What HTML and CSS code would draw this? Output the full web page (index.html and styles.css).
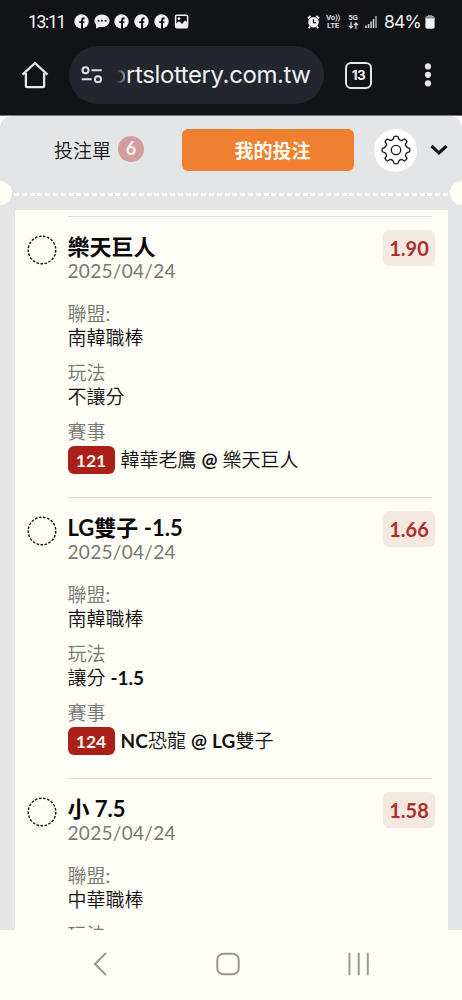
FILE: index.html
```
<!DOCTYPE html>
<html lang="zh-Hant">
<head>
<meta charset="utf-8">
<title>我的投注</title>
<link rel="stylesheet" href="styles.css">
</head>
<body>
<svg class="defs" width="0" height="0">
  <symbol id="fb" viewBox="0 0 15 15">
    <circle cx="7.5" cy="7.5" r="7.2" fill="#f1f1f3"/>
    <path d="M8 15V6.3Q8 4.1 10.6 4.3M5.3 8.1h5" fill="none" stroke="#121317" stroke-width="1.9"/>
  </symbol>
</svg>
<div class="phone">
  <header class="chrome">
    <div class="status">
      <span class="clock">13:11</span>
      <div class="notices">
        <svg width="15" height="15"><use href="#fb"/></svg>
        <svg width="16" height="15" viewBox="0 0 16 15"><ellipse cx="8" cy="6.8" rx="7.6" ry="6.3" fill="#f1f1f3"/><path d="M2 9l0 5.5 5-2z" fill="#f1f1f3"/><g fill="#121317"><circle cx="4.5" cy="6.8" r="1"/><circle cx="8" cy="6.8" r="1"/><circle cx="11.5" cy="6.8" r="1"/></g></svg>
        <svg width="15" height="15"><use href="#fb"/></svg>
        <svg width="15" height="15"><use href="#fb"/></svg>
        <svg width="15" height="15"><use href="#fb"/></svg>
        <svg width="15" height="15" viewBox="0 0 15 15"><rect x="1.600" y="1.300" width="12" height="12.400" rx="1.300" fill="#121317" stroke="#f1f1f3" stroke-width="1.500"/><path d="M2 13V9.500l3-2.200 3 2.600 3-3.400 2.600 2V13z" fill="#f1f1f3"/><circle cx="5" cy="4.600" r="1.400" fill="#f1f1f3"/></svg>
      </div>
      <div class="signals">
        <svg width="13" height="14" viewBox="0 0 13 14"><circle cx="6.500" cy="7.200" r="5.300" fill="#f1f1f3"/><path d="M.9 3.500L3.600 1M12.100 3.500L9.400 1M3 11.500l-1.200 1.700M10 11.500l1.200 1.700" stroke="#f1f1f3" stroke-width="1.800"/><path d="M6.500 4v3.600H9" fill="none" stroke="#121317" stroke-width="1.200"/></svg>
        <span class="tiny volte"><span>Vo))</span><span>LTE</span></span>
        <span class="tiny five"><span>5G</span><svg width="11" height="7" viewBox="0 0 11 7"><path d="M3 0v6M1 4l2 2 2-2M8 7V1M6 3l2-2 2 2" fill="none" stroke="#e8e8ea" stroke-width="1.200"/></svg></span>
        <svg class="bars" width="12" height="13" viewBox="0 0 12 13"><path d="M1 13v-2.500M3.500 13V9M6 13V6.500M8.500 13V4" stroke="#d5d5d8" stroke-width="1.500"/><path d="M11 13V1" stroke="#aaaaae" stroke-width="1.500"/></svg>
        <span class="percent">84%</span>
        <svg class="battery" width="10" height="14" viewBox="0 0 10 14"><path d="M3 0h4v1.600H3z" fill="#8d8d91"/><rect x=".4" y="1.200" width="9.200" height="12.500" rx="1.800" fill="#f1f1f3"/><path d="M.5 3.400q0-2.100 2-2.100h5q2 0 2 2.100z" fill="#8d8d91"/></svg>
      </div>
    </div>
    <div class="toolbar">
      <svg class="home" width="28" height="28" viewBox="0 0 28 28"><path d="M1.500 13.600L14 2l12.500 11.600M4.900 12v13.200q0 1 1 1h16.200q1 0 1-1V12" fill="none" stroke="#e5e5ea" stroke-width="2.300"/></svg>
      <div class="address">
        <svg width="22" height="18" viewBox="0 0 22 18"><g fill="none" stroke="#e0e0e6" stroke-width="2"><circle cx="4.500" cy="4.300" r="3"/><circle cx="17" cy="13.300" r="3"/><path d="M10.500 4.300h10.200M.7 13.300h10"/></g></svg>
        <div class="url"><span class="fade">o</span>rtslottery.com.tw</div>
      </div>
      <div class="tabs">13</div>
      <svg class="more" width="8" height="26" viewBox="0 0 8 26"><g fill="#e5e5ea"><circle cx="4" cy="4.400" r="3.100"/><circle cx="4" cy="12.800" r="3.100"/><circle cx="4" cy="21.400" r="3.100"/></g></svg>
    </div>
  </header>
  <div class="stage">
    <main class="slip">
      <nav class="tabbar">
        <div class="tab">投注單<span class="count">6</span></div>
        <div class="tab active">我的投注</div>
        <div class="gear"><svg width="32" height="32" viewBox="0 0 32 32"><g fill="none" stroke="#161616" stroke-width="1.300"><circle cx="16" cy="16" r="4.700"/><path stroke-linejoin="round" d="M14 2.500Q16 1.700 18 2.500C18.200 5.300 20 6.300 21.800 6.700C23 5.800 23.800 5 24.600 5.100Q26.300 5.900 27 7.500C26.800 8.500 25.900 9 25.400 10.300C25.700 12 26.700 13.900 29.600 14.200Q30.300 16 29.600 17.900C26.700 18.200 25.700 20 25.400 21.700C25.900 23 26.800 23.500 27 24.500Q26.100 26.300 24.500 27C23.500 26.800 23 25.900 21.700 25.400C20 25.700 18.300 26.700 18 29.500Q16 30.300 14 29.500C13.700 26.700 12 25.700 10.300 25.400C9 25.900 8.500 26.800 7.500 27Q5.800 26.200 5 24.500C5.200 23.500 6.100 23 6.600 21.700C6.300 20 5.300 18.200 2.400 17.900Q1.700 16 2.400 14.200C5.300 13.900 6.300 12 6.600 10.300C6.100 9 5.200 8.500 5 7.500Q5.900 5.900 7.500 5.100C8.500 5.200 9 6.100 10.300 6.700C12 6.300 13.800 5.300 14 2.500Z"/></g></svg></div>
        <svg class="chevron" width="18" height="12" viewBox="0 0 18 12"><path d="M1.500 2L9 8.800 16.500 2" fill="none" stroke="#111" stroke-width="3.100"/></svg>
      </nav>
      <div class="perforation"><i></i><span></span><i></i></div>
      <div class="sheet">
        <article class="bet">
          <div class="ring"><svg width="30" height="30" viewBox="0 0 30 30"><circle cx="15" cy="15" r="13.800"/></svg></div>
          <div class="info">
            <h2>樂天巨人</h2><time>2025/04/24</time>
            <dl><dt>聯盟:</dt><dd>南韓職棒</dd><dt>玩法</dt><dd>不讓分</dd><dt>賽事</dt><dd class="match"><span class="no">121</span><span>韓華老鷹 <b>@</b> 樂天巨人</span></dd></dl>
          </div>
          <div class="odds">1.90</div>
        </article>
        <article class="bet">
          <div class="ring"><svg width="30" height="30" viewBox="0 0 30 30"><circle cx="15" cy="15" r="13.800"/></svg></div>
          <div class="info">
            <h2>LG雙子 -1.5</h2><time>2025/04/24</time>
            <dl><dt>聯盟:</dt><dd>南韓職棒</dd><dt>玩法</dt><dd>讓分 <b>-1.5</b></dd><dt>賽事</dt><dd class="match"><span class="no">124</span><span><b>NC</b>恐龍 <b>@ LG</b>雙子</span></dd></dl>
          </div>
          <div class="odds">1.66</div>
        </article>
        <article class="bet">
          <div class="ring"><svg width="30" height="30" viewBox="0 0 30 30"><circle cx="15" cy="15" r="13.800"/></svg></div>
          <div class="info">
            <h2>小 7.5</h2><time>2025/04/24</time>
            <dl><dt>聯盟:</dt><dd>中華職棒</dd><dt>玩法</dt></dl>
          </div>
          <div class="odds">1.58</div>
        </article>
      </div>
    </main>
  </div>
  <footer class="navbar">
    <svg width="14" height="24" viewBox="0 0 14 24"><path d="M12.500 1.500L2 12l10.500 10.500"/></svg>
    <svg width="24" height="24" viewBox="0 0 24 24"><rect x="1.300" y="1.800" width="21.400" height="20.400" rx="6"/></svg>
    <svg width="22" height="24" viewBox="0 0 22 24"><path d="M1.500 1.500v21M10.700 1.500v21M19.800 1.500v21"/></svg>
  </footer>
</div>
</body>
</html>
```
FILE: styles.css
```
* { box-sizing: border-box; }
body { margin: 0; font-family: Lato, "Noto Sans CJK TC", sans-serif; }
.defs { position: absolute; }
svg { display: block; flex: none; }
.phone { width: 462px; height: 1000px; display: flex; flex-direction: column; background: #fffef6; overflow: hidden; }

.chrome { height: 116px; flex: none; background: #121317; border-bottom: 1px solid #77787b; color: #f1f1f3; font-family: Inter, sans-serif; }
.status { height: 43px; display: flex; align-items: center; padding: 0 27px 0 28px; }
.clock { width: 45.500px; font: 17.500px/20px Roboto, sans-serif; letter-spacing: -1.300px; white-space: nowrap; }
.notices { display: flex; gap: 5px; }
.notices svg:nth-child(2) { margin-right: -1px; }
.signals { margin-left: auto; display: flex; align-items: center; }
.tiny { display: flex; flex-direction: column; align-items: center; font: 700 8px/8px Roboto, sans-serif; letter-spacing: -.3px; color: #d8d8dc; }
.volte { width: 16px; margin-left: 5px; }
.five { width: 14px; margin-left: 5px; }
.bars { margin-left: 5px; }
.percent { width: 37px; margin: 0 4px 0 7px; font: 17.500px/20px Inter, sans-serif; letter-spacing: -.8px; white-space: nowrap; }
.toolbar { height: 64px; display: flex; align-items: center; padding-left: 21px; }
.address { width: 255px; height: 58px; margin-left: 20px; padding-left: 12px; border-radius: 29px; background: #24262e; display: flex; align-items: center; }
.url { margin-left: 9px; font-size: 24px; line-height: 30px; letter-spacing: -.4px; white-space: nowrap; }
.fade { background: linear-gradient(90deg, transparent 30%, #a5a6aa); -webkit-background-clip: text; background-clip: text; color: transparent; }
.tabs { width: 27px; height: 27px; margin-left: 21px; border: 2.500px solid #e5e5ea; border-radius: 6px; font-size: 13.500px; font-weight: 700; letter-spacing: -.5px; line-height: 23px; text-align: center; }
.more { margin-left: 52px; }

.stage { flex: 1; min-height: 0; overflow: hidden; background: #fff; }
.slip { height: 900px; background: #e4e5e7; border-radius: 12px 12px 0 0; }
.tabbar { height: 68px; display: flex; align-items: center; font-size: 19px; }
.tab { width: 128px; margin-left: 54px; display: flex; align-items: center; padding-top: 2px; line-height: 28px; color: #161616; font-family: Lato, "Noto Sans CJK TC DemiLight", "Noto Sans CJK TC", sans-serif; }
.count { width: 26px; height: 26px; margin-left: 7px; margin-top: -4px; border-radius: 50%; background: #d39d9f; color: #f9f2f0; font-size: 18px; font-weight: 700; line-height: 25px; text-align: center; }
.active { width: 172px; height: 42px; margin: -1px 0 0; justify-content: center; padding-left: 9px; border-radius: 6px; background: #ee8030; color: #fffaf0; font-family: Lato, "Noto Sans CJK TC", sans-serif; font-weight: 700; }
.gear { width: 43px; height: 43px; margin-left: 20px; border-radius: 50%; background: #fff; display: grid; place-items: center; }
.chevron { margin-left: 13px; }
.perforation { height: 26px; margin-top: -4px; display: flex; align-items: center; justify-content: space-between; }
.perforation i { width: 12px; height: 24px; background: #fffef6; border-radius: 0 12px 12px 0; }
.perforation i:last-child { border-radius: 12px 0 0 12px; }
.perforation span { flex: 1; height: 3px; margin: 2px 2px 0; background: repeating-linear-gradient(90deg, #fffef6 0 5px, transparent 5px 7.800px); }
.sheet { margin: 4px 14.500px 0; padding-top: 6px; background: #fffef6; }
.bet { height: 281px; display: flex; align-items: flex-start; }
.ring { width: 53px; padding: 19px 0 0 12px; }
.ring circle { fill: none; stroke: #111; stroke-width: 1.400; stroke-dasharray: 2.600 1.500; }
.info { flex: 1; min-width: 0; height: 281px; padding-top: 17px; border-top: 1px solid #dedfdb; white-space: nowrap; }
h2 { margin: 0; font-size: 22px; line-height: 26px; font-weight: 700; color: #090909; }
time { display: block; font-size: 19px; line-height: 22px; letter-spacing: .3px; color: #777775; }
dl { margin: 20px 0 0; font-family: Lato, "Noto Sans CJK TC DemiLight", "Noto Sans CJK TC", sans-serif; }
dt, dd { margin: 0; font-size: 19px; line-height: 24px; height: 24px; }
dt { color: #777775; }
dd { margin-bottom: 11px; color: #111; }
.match { height: 28px; margin-top: 2px; display: flex; align-items: center; }
.match b { letter-spacing: .2px; }
.no { width: 47px; height: 28px; margin-right: 6px; border-radius: 6px; background: #ab1f19; color: #fffaf0; font-weight: 700; font-size: 17.500px; line-height: 29px; text-align: center; }
.odds { width: 52px; height: 36px; margin: 14px 12.500px 0 -49px; border-radius: 6px; background: #f4e8e1; color: #ad3029; font-size: 20px; font-weight: 700; line-height: 36px; text-align: center; }

.navbar { height: 70px; flex: none; display: flex; align-items: center; justify-content: space-between; padding: 0 92px 3px 93px; background: #fffef6; }
.navbar svg { fill: none; stroke: #979794; stroke-width: 2; stroke-linecap: round; }
```
